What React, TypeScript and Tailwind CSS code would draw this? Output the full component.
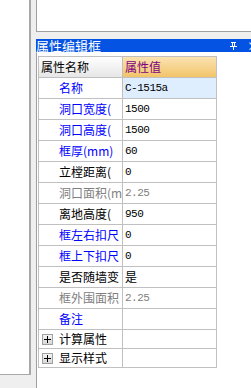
import React from "react";

type Row = { label: string; value?: string; color: "blue" | "black" | "gray"; selected?: boolean; valueGray?: boolean };

const rows: Row[] = [
  { label: "名称", value: "C-1515a", color: "blue", selected: true },
  { label: "洞口宽度(", value: "1500", color: "blue" },
  { label: "洞口高度(", value: "1500", color: "blue" },
  { label: "框厚(mm)", value: "60", color: "blue" },
  { label: "立樘距离(", value: "0", color: "black" },
  { label: "洞口面积(m", value: "2.25", color: "gray", valueGray: true },
  { label: "离地高度(", value: "950", color: "black" },
  { label: "框左右扣尺", value: "0", color: "blue" },
  { label: "框上下扣尺", value: "0", color: "blue" },
  { label: "是否随墙变", value: "是", color: "black" },
  { label: "框外围面积", value: "2.25", color: "gray", valueGray: true },
  { label: "备注", value: "", color: "blue" },
];

const labelColor = {
  blue: "text-[#0000ff]",
  black: "text-black",
  gray: "text-[#808080]",
};

const cjk = { fontFamily: '"Noto Sans CJK SC", "Noto Sans", sans-serif' };

function PlusBox() {
  return (
    <div className="w-[11px] h-[11px] border border-[#a0a0a0] bg-gradient-to-b from-[#f4f4f4] to-[#d8d8d8] flex items-center justify-center shrink-0">
      <svg width="7" height="7" viewBox="0 0 7 7">
        <rect x="0" y="3" width="7" height="1" fill="#000" />
        <rect x="3" y="0" width="1" height="7" fill="#000" />
      </svg>
    </div>
  );
}

export default function App() {
  return (
    <div
      className="w-[251px] h-[388px] bg-[#efefef] flex overflow-hidden text-[12px]"
      style={{ fontFamily: '"Noto Sans CJK SC", "Noto Sans", sans-serif' }}
    >
      {/* left panel */}
      <div className="w-[31px] h-[375px] bg-white border-r-2 border-b border-[#a8a8a8] shrink-0" />
      <div className="w-[5px] shrink-0" />
      {/* right column */}
      <div className="flex-1 flex flex-col">
        <div className="h-[32px] bg-white border-l border-b border-[#a0a0a0]" />
        <div className="h-[7px]" />
        <div className="h-[13px] bg-[#0453e2] flex items-center text-white text-[13px] leading-[13px] relative">
          <span>属性编辑框</span>
          <svg className="absolute left-[194px] top-[3px]" width="7" height="8" viewBox="0 0 7 8">
            <rect x="1" y="0" width="5" height="1" fill="#fff" />
            <rect x="2" y="0" width="1" height="4" fill="#fff" />
            <rect x="4" y="0" width="1" height="4" fill="#fff" />
            <rect x="0" y="4" width="7" height="1" fill="#fff" />
            <rect x="3" y="5" width="1" height="3" fill="#fff" />
          </svg>
          <span className="absolute left-[211px] top-[0px] text-[12px] leading-[13px]">×</span>
        </div>
        <div className="flex-1 bg-white border-l border-[#a0a0a0] pt-[4px] pl-[1px]">
          <div className="w-[179px] border-l border-t border-[#c0c0c0]">
            {/* header */}
            <div className="flex h-[21px] border-b border-[#c0c0c0]">
              <div className="w-[84px] border-r border-[#c0c0c0] bg-gradient-to-b from-white to-[#e6e6e6] flex items-center pl-[2px] text-black">
                属性名称
              </div>
              <div className="w-[94px] border-r border-[#c0c0c0] bg-gradient-to-b from-[#fbe3b2] to-[#f2c468] flex items-center pl-[2px] text-[#800080]">
                属性值
              </div>
            </div>
            {rows.map((r, i) => (
              <div key={i} className="flex h-[21px] border-b border-[#c0c0c0]">
                <div
                  className={`w-[84px] border-r border-[#c0c0c0] flex items-center pl-[20px] overflow-hidden whitespace-nowrap ${labelColor[r.color]}`}
                  style={cjk}
                >
                  {r.label}
                </div>
                <div
                  className={`w-[94px] border-r border-[#c0c0c0] flex items-center pl-[2px] whitespace-nowrap text-[11px] tracking-[-0.5px] ${
                    r.selected ? "bg-[#dfeeff]" : ""
                  } ${r.valueGray ? "text-[#808080]" : "text-black"}`}
                  style={{ fontFamily: '"Liberation Mono", "Noto Sans CJK SC", monospace' }}
                >
                  {r.value === "是" ? (
                    <span className="text-[12px] tracking-normal" style={cjk}>
                      是
                    </span>
                  ) : (
                    r.value
                  )}
                </div>
              </div>
            ))}
            {["计算属性", "显示样式"].map((t) => (
              <div key={t} className="flex h-[19px] border-b border-[#c0c0c0]">
                <div className="w-[84px] border-r border-[#c0c0c0] flex items-center pl-[3px] gap-[6px] text-black whitespace-nowrap">
                  <PlusBox />
                  <span>{t}</span>
                </div>
                <div className="w-[94px] border-r border-[#c0c0c0]" />
              </div>
            ))}
          </div>
        </div>
      </div>
    </div>
  );
}
